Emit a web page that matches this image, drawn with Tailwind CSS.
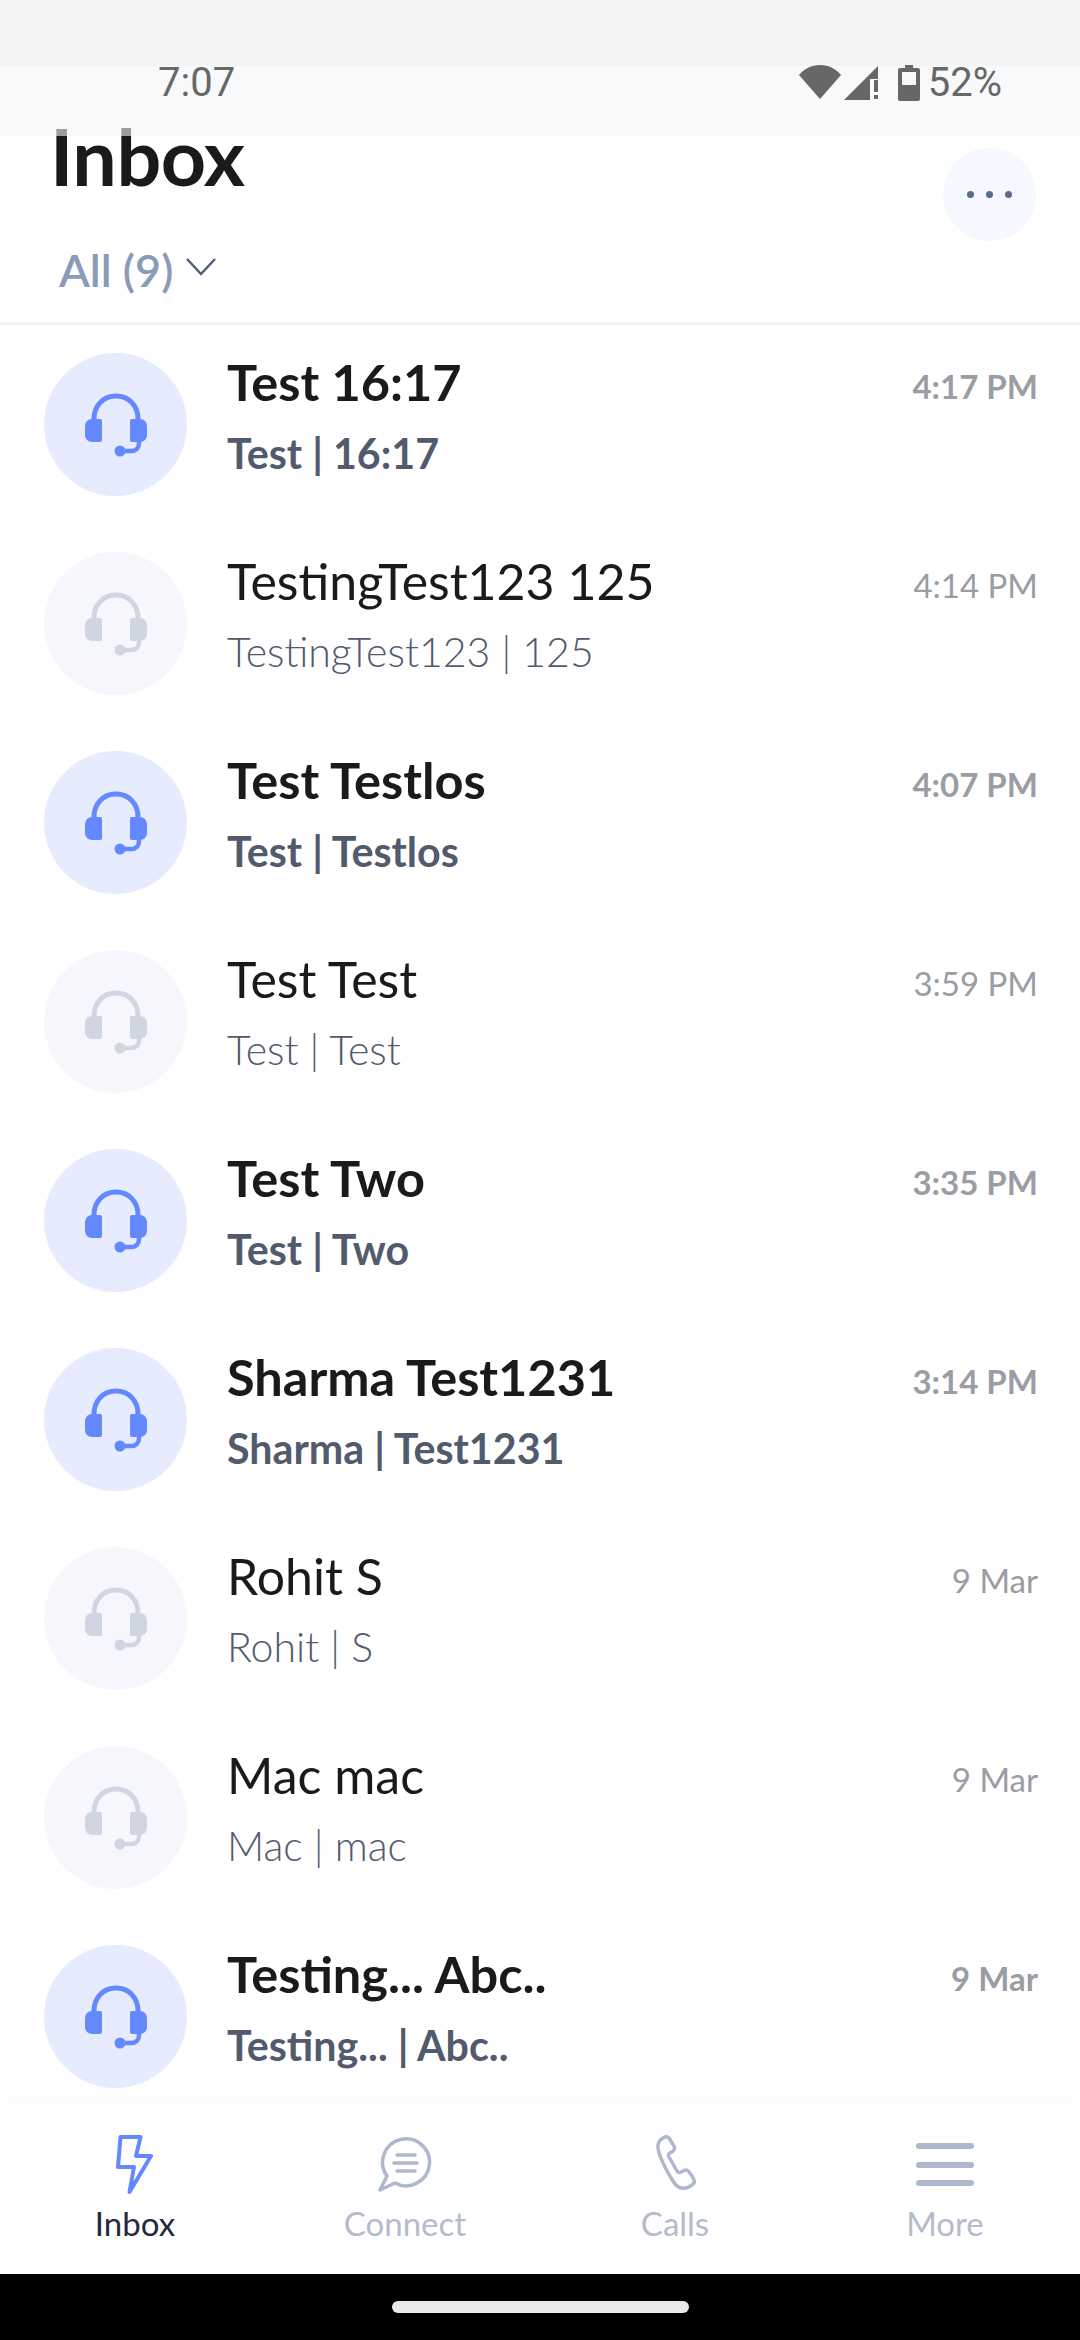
<!DOCTYPE html>
<html lang="en">
<head>
    <meta charset="UTF-8">
    <meta name="viewport" content="width=device-width, initial-scale=1.0">
    <title>Inbox</title>
    <script src="https://cdn.jsdelivr.net/npm/@tailwindcss/browser@4"></script>
</head>
<body class="bg-white font-['Lato',sans-serif]">
    <svg class="hidden" xmlns="http://www.w3.org/2000/svg">
        <symbol id="headset" viewBox="0 0 62 64">
            <path d="M9 30V26C9 13 18 3 31 3S53 13 53 26V30" fill="none" stroke="currentColor" stroke-width="5"/>
            <path d="M7 26H15A2 2 0 0 1 17 28V47A2 2 0 0 1 15 49H7A7 7 0 0 1 0 42V33A7 7 0 0 1 7 26Z" fill="currentColor"/>
            <path d="M55 26H47A2 2 0 0 0 45 28V47A2 2 0 0 0 47 49H55A7 7 0 0 0 62 42V33A7 7 0 0 0 55 26Z" fill="currentColor"/>
            <path d="M54 47V50C54 55 51 58 46 58H36" fill="none" stroke="currentColor" stroke-width="4.5"/>
            <circle cx="35" cy="58" r="5.5" fill="currentColor"/>
        </symbol>
    </svg>

    <div class="relative w-[1080px] h-[2340px] overflow-hidden flex flex-col">
        <!-- system status bar sits over the app header -->
        <div class="absolute top-0 left-0 right-0 z-10">
            <div class="h-[66px] bg-[#f3f4f6]"></div>
            <div class="h-[70px] bg-[#f3f5f9]/60 flex items-start pl-[158px] pr-[78px] text-[#666866] font-['Roboto',sans-serif] text-[40px] leading-[46px]">
                <span class="mt-[-6px]">7:07</span>
                <div class="ml-auto flex items-start">
                    <svg class="w-[42px] h-[34px] mt-[-1px]" viewBox="0 0 42 34"><path d="M21 34L0 10C5 4 12 0 21 0S37 4 42 10Z" fill="#666866"/></svg>
                    <svg class="w-[34px] h-[34px] ml-[3px]" viewBox="0 0 34 34"><path d="M0 34L34 0V13H26V34Z" fill="#666866"/><rect x="30" y="14" width="4" height="12" fill="#666866"/><rect x="30" y="29" width="4" height="4" fill="#666866"/></svg>
                    <svg class="w-[22px] h-[36px] ml-[20px] mt-[-1px]" viewBox="0 0 22 36"><path d="M7 0H15V3H20A2 2 0 0 1 22 5V34A2 2 0 0 1 20 36H2A2 2 0 0 1 0 34V5A2 2 0 0 1 2 3H7Z" fill="#666866"/><rect x="4" y="7" width="14" height="13" fill="#f8f9fb"/></svg>
                    <span class="ml-[8px] mt-[-6px]">52%</span>
                </div>
            </div>
        </div>

        <header class="h-[325px] shrink-0 border-b-[3px] border-[#eef0f3] relative pl-[50px] pr-[44px]">
            <div class="flex items-start justify-between pt-[114px]">
                <h1 class="text-[79px] leading-[84px] font-bold text-[#1a1a1a] tracking-[-0.5px]">Inbox</h1>
                <button class="w-[93px] h-[93px] mt-[34px] rounded-full bg-[#f5f8fe] flex items-center justify-center gap-[12px]">
                    <span class="w-[7px] h-[7px] rounded-full bg-[#5a6a8a]"></span>
                    <span class="w-[7px] h-[7px] rounded-full bg-[#5a6a8a]"></span>
                    <span class="w-[7px] h-[7px] rounded-full bg-[#5a6a8a]"></span>
                </button>
            </div>
            <div class="flex items-center pl-[9px] mt-[2px]">
                <span class="text-[45px] leading-[54px] font-semibold text-[#8a9bb8]">All (9)</span>
                <svg class="w-[30px] h-[18px] ml-[13px] mt-[-6px]" viewBox="0 0 30 18"><path d="M1 1L15 16L29 1" fill="none" stroke="#4f5f80" stroke-width="2.5"/></svg>
            </div>
        </header>

        <main class="flex-1 overflow-hidden">
            <div class="h-[199px] flex items-center pl-[44px] pr-[42px]">
                <div class="w-[143px] h-[143px] rounded-full bg-[#e6ebfe] text-[#6488ff] flex items-center justify-center shrink-0"><svg class="w-[62px] h-[64px]"><use href="#headset"/></svg></div>
                <div class="flex-1 ml-[40px] pb-[19px]"><div class="text-[50.5px] leading-[64px] font-bold text-[#1a1a1a]">Test 16:17</div><div class="text-[41.2px] leading-[54px] mt-[12px] font-bold text-[#525a6e]">Test | 16:17</div></div>
                <div class="self-start mt-[41px] text-[33px] leading-[40px] font-bold text-[#9a9da3]">4:17 PM</div>
            </div>
            <div class="h-[199px] flex items-center pl-[44px] pr-[42px]">
                <div class="w-[143px] h-[143px] rounded-full bg-[#f6f7fc] text-[#cfd6e1] flex items-center justify-center shrink-0"><svg class="w-[62px] h-[64px]"><use href="#headset"/></svg></div>
                <div class="flex-1 ml-[40px] pb-[19px]"><div class="text-[50px] leading-[64px] text-[#1a1a1a]">TestingTest123 125</div><div class="text-[41px] leading-[54px] mt-[12px] font-light text-[#525a6e]">TestingTest123 | 125</div></div>
                <div class="self-start mt-[41px] text-[33px] leading-[40px] text-[#9a9da3]">4:14 PM</div>
            </div>
            <div class="h-[199px] flex items-center pl-[44px] pr-[42px]">
                <div class="w-[143px] h-[143px] rounded-full bg-[#e6ebfe] text-[#6488ff] flex items-center justify-center shrink-0"><svg class="w-[62px] h-[64px]"><use href="#headset"/></svg></div>
                <div class="flex-1 ml-[40px] pb-[19px]"><div class="text-[50.5px] leading-[64px] font-bold text-[#1a1a1a]">Test Testlos</div><div class="text-[41.2px] leading-[54px] mt-[12px] font-bold text-[#525a6e]">Test | Testlos</div></div>
                <div class="self-start mt-[41px] text-[33px] leading-[40px] font-bold text-[#9a9da3]">4:07 PM</div>
            </div>
            <div class="h-[199px] flex items-center pl-[44px] pr-[42px]">
                <div class="w-[143px] h-[143px] rounded-full bg-[#f6f7fc] text-[#cfd6e1] flex items-center justify-center shrink-0"><svg class="w-[62px] h-[64px]"><use href="#headset"/></svg></div>
                <div class="flex-1 ml-[40px] pb-[19px]"><div class="text-[50px] leading-[64px] text-[#1a1a1a]">Test Test</div><div class="text-[41px] leading-[54px] mt-[12px] font-light text-[#525a6e]">Test | Test</div></div>
                <div class="self-start mt-[41px] text-[33px] leading-[40px] text-[#9a9da3]">3:59 PM</div>
            </div>
            <div class="h-[199px] flex items-center pl-[44px] pr-[42px]">
                <div class="w-[143px] h-[143px] rounded-full bg-[#e6ebfe] text-[#6488ff] flex items-center justify-center shrink-0"><svg class="w-[62px] h-[64px]"><use href="#headset"/></svg></div>
                <div class="flex-1 ml-[40px] pb-[19px]"><div class="text-[50.5px] leading-[64px] font-bold text-[#1a1a1a]">Test Two</div><div class="text-[41.2px] leading-[54px] mt-[12px] font-bold text-[#525a6e]">Test | Two</div></div>
                <div class="self-start mt-[41px] text-[33px] leading-[40px] font-bold text-[#9a9da3]">3:35 PM</div>
            </div>
            <div class="h-[199px] flex items-center pl-[44px] pr-[42px]">
                <div class="w-[143px] h-[143px] rounded-full bg-[#e6ebfe] text-[#6488ff] flex items-center justify-center shrink-0"><svg class="w-[62px] h-[64px]"><use href="#headset"/></svg></div>
                <div class="flex-1 ml-[40px] pb-[19px]"><div class="text-[50.5px] leading-[64px] font-bold text-[#1a1a1a]">Sharma Test1231</div><div class="text-[41.2px] leading-[54px] mt-[12px] font-bold text-[#525a6e]">Sharma | Test1231</div></div>
                <div class="self-start mt-[41px] text-[33px] leading-[40px] font-bold text-[#9a9da3]">3:14 PM</div>
            </div>
            <div class="h-[199px] flex items-center pl-[44px] pr-[42px]">
                <div class="w-[143px] h-[143px] rounded-full bg-[#f6f7fc] text-[#cfd6e1] flex items-center justify-center shrink-0"><svg class="w-[62px] h-[64px]"><use href="#headset"/></svg></div>
                <div class="flex-1 ml-[40px] pb-[19px]"><div class="text-[50px] leading-[64px] text-[#1a1a1a]">Rohit S</div><div class="text-[41px] leading-[54px] mt-[12px] font-light text-[#525a6e]">Rohit | S</div></div>
                <div class="self-start mt-[41px] text-[33px] leading-[40px] text-[#9a9da3]">9 Mar</div>
            </div>
            <div class="h-[199px] flex items-center pl-[44px] pr-[42px]">
                <div class="w-[143px] h-[143px] rounded-full bg-[#f6f7fc] text-[#cfd6e1] flex items-center justify-center shrink-0"><svg class="w-[62px] h-[64px]"><use href="#headset"/></svg></div>
                <div class="flex-1 ml-[40px] pb-[19px]"><div class="text-[50px] leading-[64px] text-[#1a1a1a]">Mac mac</div><div class="text-[41px] leading-[54px] mt-[12px] font-light text-[#525a6e]">Mac | mac</div></div>
                <div class="self-start mt-[41px] text-[33px] leading-[40px] text-[#9a9da3]">9 Mar</div>
            </div>
            <div class="h-[199px] flex items-center pl-[44px] pr-[42px]">
                <div class="w-[143px] h-[143px] rounded-full bg-[#e6ebfe] text-[#6488ff] flex items-center justify-center shrink-0"><svg class="w-[62px] h-[64px]"><use href="#headset"/></svg></div>
                <div class="flex-1 ml-[40px] pb-[19px]"><div class="text-[50.5px] leading-[64px] font-bold text-[#1a1a1a]">Testing... Abc..</div><div class="text-[41.2px] leading-[54px] mt-[12px] font-bold text-[#525a6e]">Testing... | Abc..</div></div>
                <div class="self-start mt-[41px] text-[33px] leading-[40px] font-bold text-[#9a9da3]">9 Mar</div>
            </div>
        </main>

        <nav class="relative h-[171px] shrink-0 bg-white shadow-[0_-5px_6px_rgba(0,0,0,0.02)] grid grid-cols-4 text-[33px] leading-[40px] text-[#b4bccb]">
            <div class="flex flex-col items-center">
                <svg class="w-[40px] h-[60px] mt-[32px] ml-[-4px]" viewBox="0 0 40 60"><path d="M7.5 2H27.5L23 21H38L16.5 57L21 32H5Z" fill="none" stroke="#6488ff" stroke-width="4" stroke-linejoin="round"/></svg>
                <span class="mt-[8px] text-[#232a3b]">Inbox</span>
            </div>
            <div class="flex flex-col items-center">
                <svg class="w-[54px] h-[60px] mt-[32px]" viewBox="0 0 54 60"><path d="M9 41L2 55L17 48A23.5 23.5 0 1 0 9 41Z" fill="none" stroke="#adb8cd" stroke-width="3.5" stroke-linejoin="round"/><path d="M19 20H37M16 28H39M19 36H37" fill="none" stroke="#adb8cd" stroke-width="3.5" stroke-linecap="round"/></svg>
                <span class="mt-[8px]">Connect</span>
            </div>
            <div class="flex flex-col items-center">
                <svg class="w-[44px] h-[60px] mt-[32px]" viewBox="0 0 44 60"><path d="M12 2C8 3 4 8 5 13C6 20 12 34 20 46C23 51 27 54 32 53C35 53 39 50 41 48C42 46 41 44 39 41L36 37C35 35 33 34.5 31 35.5L28 37C26 38 25 37.5 24 36L16 22C15 20 15 19 17 18L20 16C22 14.5 22 13 21 11L16 3C15 2 13.5 1.5 12 2Z" fill="none" stroke="#adb8cd" stroke-width="3.5" stroke-linejoin="round"/></svg>
                <span class="mt-[8px]">Calls</span>
            </div>
            <div class="flex flex-col items-center">
                <div class="w-[58px] h-[43px] mt-[40px] mb-[9px] flex flex-col justify-between">
                    <div class="h-[6px] rounded-full bg-[#adb8cd]"></div>
                    <div class="h-[6px] rounded-full bg-[#adb8cd]"></div>
                    <div class="h-[6px] rounded-full bg-[#adb8cd]"></div>
                </div>
                <span class="mt-[8px]">More</span>
            </div>
        </nav>

        <div class="h-[66px] shrink-0 bg-black flex justify-center pt-[27px]">
            <div class="w-[297px] h-[12px] rounded-full bg-[#e9e9e9]"></div>
        </div>
    </div>
</body>
</html>
